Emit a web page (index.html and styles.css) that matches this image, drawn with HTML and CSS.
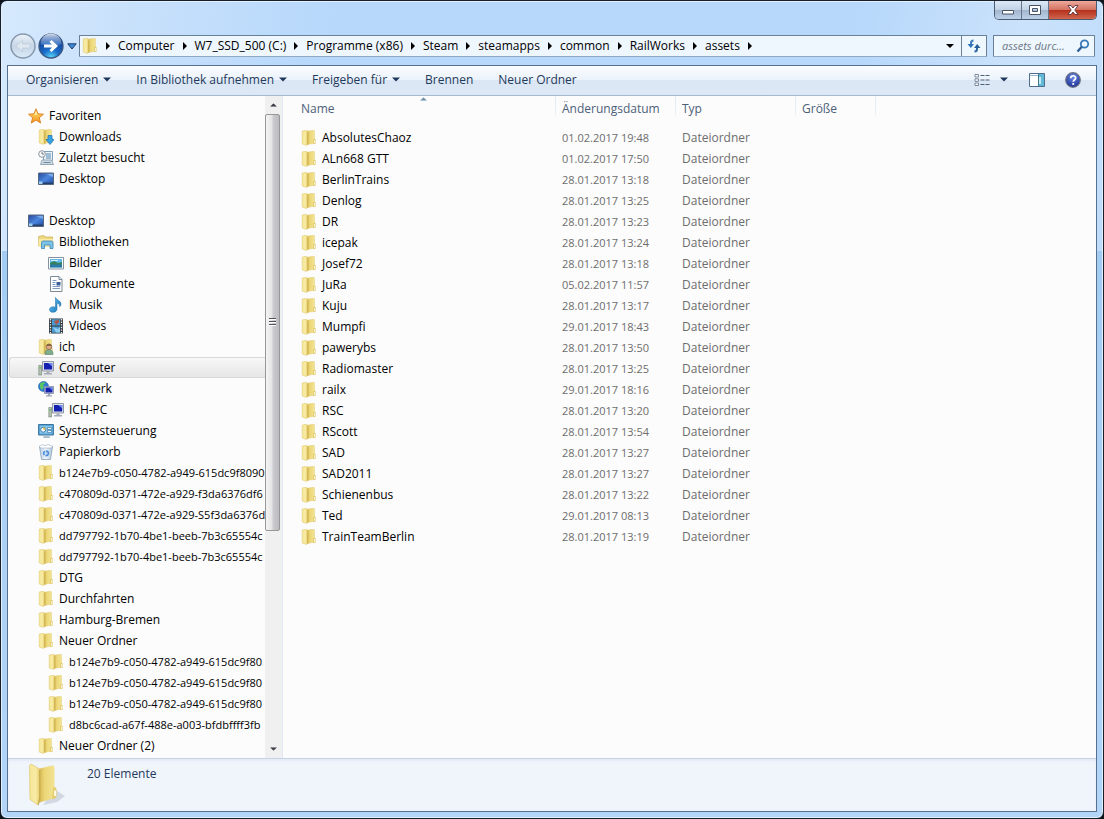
FILE: index.html
```html
<!DOCTYPE html>
<html lang="de">
<head>
<meta charset="utf-8">
<title>assets</title>
<link rel="stylesheet" href="styles.css">
</head>
<body>
<svg class="sprite" aria-hidden="true">
  <defs>
    <linearGradient id="gFold" x1="0" y1="0" x2="1" y2="0"><stop offset="0" stop-color="#f5e795"/><stop offset="0.6" stop-color="#f8eba6"/><stop offset="1" stop-color="#e5cc66"/></linearGradient>
    <linearGradient id="gBack" x1="0" y1="0" x2="1" y2="0"><stop offset="0" stop-color="#d0b14a"/><stop offset="0.4" stop-color="#ecd676"/><stop offset="1" stop-color="#f3e494"/></linearGradient>
    <linearGradient id="gStar" x1="0" y1="0" x2="0" y2="1"><stop offset="0" stop-color="#ffe870"/><stop offset="1" stop-color="#f6941d"/></linearGradient>
    <linearGradient id="gScreen" x1="0" y1="0" x2="1" y2="1"><stop offset="0" stop-color="#27489c"/><stop offset="0.5" stop-color="#4b86dd"/><stop offset="1" stop-color="#1f49a2"/></linearGradient>
    <linearGradient id="gNote" x1="0" y1="0" x2="1" y2="1"><stop offset="0" stop-color="#6cc4f2"/><stop offset="1" stop-color="#1273b8"/></linearGradient>
    <linearGradient id="gBin" x1="0" y1="0" x2="1" y2="0"><stop offset="0" stop-color="#b9cfe3"/><stop offset="0.5" stop-color="#eef6fd"/><stop offset="1" stop-color="#a9c2d9"/></linearGradient>
    <radialGradient id="gOrb" cx="0.5" cy="1" r="0.9"><stop offset="0" stop-color="#5fe0ff"/><stop offset="0.4" stop-color="#1b6cc8"/><stop offset="1" stop-color="#123a8c"/></radialGradient>
    <linearGradient id="gGloss" x1="0" y1="0" x2="0" y2="1"><stop offset="0" stop-color="#ffffff" stop-opacity="0.8"/><stop offset="1" stop-color="#7fb0ee" stop-opacity="0.35"/></linearGradient>
    <radialGradient id="gHelp" cx="0.5" cy="0.3" r="0.7"><stop offset="0" stop-color="#6c8de8"/><stop offset="1" stop-color="#1b2f94"/></radialGradient>
    <linearGradient id="gGhost" x1="0" y1="0" x2="0" y2="1"><stop offset="0" stop-color="#eef4fa"/><stop offset="0.5" stop-color="#c6d5e6"/><stop offset="1" stop-color="#dcebf8"/></linearGradient>
  </defs>
  <symbol id="i-folder" viewBox="0 0 16 16">
    <path d="M5.500 1.300 12.500.3q1 0 1 .8V13l-8 1.800z" fill="url(#gBack)" stroke="#dcc468" stroke-width=".4"/>
    <path d="M1.200 1 5 .3l1.500 1V14.500l-1.200.9-4.100-1.400z" fill="url(#gFold)" stroke="#dcc468" stroke-width=".5"/>
    <path d="M6.800 2.500v12" stroke="#c4a343" stroke-width=".6"/>
    <path d="M12.200 9.200l1.800-.5.7.8v3.900l-2.500.8z" fill="#e2ca68"/><path d="M13.700 10v3" stroke="#fff" stroke-width=".9"/>
  </symbol>
  <symbol id="i-star" viewBox="0 0 16 16">
    <path d="M8 .8l2 5 5.400.4-4.100 3.500 1.300 5.300L8 12.100 3.300 15l1.300-5.300L.6 6.200 6 5.800z" fill="url(#gStar)" stroke="#d9781a" stroke-width=".9"/>
    <path d="M8 3.300l1.200 3.300-3 .3z" fill="#fff5b8"/>
  </symbol>
  <symbol id="i-down" viewBox="0 0 16 16">
    <use href="#i-folder" width="16" height="16"/>
    <path d="M10 6.500h4v4h2l-4 5-4-5h2z" fill="#38a3e6" stroke="#1a6fb2" stroke-width=".7"/>
  </symbol>
  <symbol id="i-recent" viewBox="0 0 16 16">
    <path d="M5.500 1.500h9v9h-9z" fill="#eaf3fa" stroke="#7fa0bb"/>
    <path d="M8 4h5M8 6h5M8 8h5" stroke="#5586b0" stroke-width="1"/>
    <path d="M4 10h9.500l2 4.500H2.500z" fill="#cfdae3" stroke="#8397a6" stroke-width=".8"/>
    <path d="M5.500 12.500h7" stroke="#6d8ca4"/>
    <circle cx="4" cy="4" r="3.300" fill="#f7f9fa" stroke="#8b979f"/><path d="M4 2v2h2" fill="none" stroke="#53606a" stroke-width=".8"/>
  </symbol>
  <symbol id="i-desk" viewBox="0 0 16 16">
    <path d="M.5 2h15v11.500H.5z" fill="url(#gScreen)" stroke="#56687e"/>
    <path d="M1 11.500h14V13H1z" fill="#26406e"/><path d="M1 10.500h3.500V13H1z" fill="#9fd0ee"/>
    <path d="M8 3h7v3z" fill="#9cc4f6" opacity=".6"/>
  </symbol>
  <symbol id="i-lib" viewBox="0 0 16 16">
    <path d="M.7 2.500 6 1.500l1 1.500h7.500v9H.7z" fill="#efd980" stroke="#c8aa4c" stroke-width=".7"/>
    <path d="M.7 5h14.600v7.500H.7z" fill="#faeaa2"/>
    <path d="M3.500 14.500V8.500q0-1.500 1.500-1.500h8.500q1.500 0 1.500 1.500v6h-3V11H6.500v3.500z" fill="#7cc3ea" stroke="#3c84b4" stroke-width=".8"/>
  </symbol>
  <symbol id="i-pic" viewBox="0 0 16 16">
    <path d="M.5 2.500h15v11.500H.5z" fill="#fff" stroke="#8495a1"/>
    <path d="M2 4h12v8.500H2z" fill="#63b9e8"/><path d="M2 8l4-2 4 2 4-1v5H2z" fill="#35825a"/><path d="M2 9.500h12v3H2z" fill="#2a79a6"/><path d="M3 5h7v1H3z" fill="#cdeafa"/>
  </symbol>
  <symbol id="i-doc" viewBox="0 0 16 16">
    <path d="M2.500.5h8.500l3 3v12H2.500z" fill="#fff" stroke="#7c8b98"/><path d="M11 .5v3h3" fill="#dfe6ec" stroke="#7c8b98"/>
    <path d="M4.500 4.500h4M4.500 6.500h3M4.500 8.500h3M4.500 10.500h7.500M4.500 12.500h7.500" stroke="#789cc4"/><path d="M8.500 6h4v3.500h-4z" fill="#3a5f94"/>
  </symbol>
  <symbol id="i-music" viewBox="0 0 16 16">
    <path d="M7.500.5c.8 2.500 5.500 3 5.500 6.500 0 1.200-.6 2-1.300 2.700.2-2.500-1.300-3.300-2.700-3.700v6c0 2-1.700 3.300-4 3.300-2 0-3.500-1-3.500-2.600S3 9.800 5.200 9.800c.9 0 1.700.2 2.300.5z" fill="url(#gNote)" stroke="#1b6ba6" stroke-width=".5"/>
  </symbol>
  <symbol id="i-video" viewBox="0 0 16 16">
    <path d="M1 .5h14v15H1z" fill="#30373d"/><path d="M4 1.200h8v6.300H4zM4 8.500h8v6.300H4z" fill="#4a9bd2"/>
    <path d="M6 3l5-1.500v3L8 7z" fill="#a65a4c"/><path d="M5 9l5 2 2-2v5.500H8z" fill="#8ccdf0"/>
    <path d="M2.500 1v15M13.500 1v15" stroke="#e8eef2" stroke-width="1.400" stroke-dasharray="1.400 1.200"/>
  </symbol>
  <symbol id="i-user" viewBox="0 0 16 16">
    <use href="#i-folder" width="16" height="16"/>
    <path d="M7 15.500c0-4 1.500-5 3.800-5s4.200 1 4.200 5z" fill="#7fae8c" stroke="#4d7d60" stroke-width=".6"/><circle cx="11" cy="7.800" r="2.800" fill="#dca982" stroke="#8d6a4c" stroke-width=".8"/><path d="M8.300 7c.5-3 5-3 5.400 0z" fill="#8a6544"/>
  </symbol>
  <symbol id="i-pc" viewBox="0 0 16 16">
    <path d="M.8 5.500h2.700v9.500H.8z" fill="#b7c4b4" stroke="#6d7c72" stroke-width=".6"/><path d="M1.300 7h1.600v1.500H1.300z" fill="#6cbd5a"/>
    <path d="M4.500 1.500h11v9.500h-11z" fill="#dfe3ea" stroke="#8f96a6"/><path d="M6 3h8.200v6.500H6z" fill="#1420b0"/><path d="M10 3h4.200v3.500z" fill="#6b88ea"/>
    <path d="M8.500 11.500h3v1.500h2.500v1.500H6V13h2.500z" fill="#a5abb8"/>
  </symbol>
  <symbol id="i-net" viewBox="0 0 16 16">
    <circle cx="5.500" cy="5.500" r="5" fill="#2c7fd2" stroke="#1e5a9e" stroke-width=".6"/><path d="M2 2.500c2-2 5-1.500 5.500-.5L5 4l1 2-2 3-2-2.500z" fill="#5bc565"/>
    <path d="M6.500 5.500h9v7h-9z" fill="#d5dae6" stroke="#7b86a0" stroke-width=".8"/><path d="M7.500 6.500h7v5h-7z" fill="#1420b0"/><path d="M11 6.500h3.500v3z" fill="#6b88ea"/><path d="M10 13h2v1.200h2v1.300H8v-1.300h2z" fill="#9aa3b5"/>
  </symbol>
  <symbol id="i-ctl" viewBox="0 0 16 16">
    <path d="M.6 1.500h14.800v10.500H.6z" fill="#5aa9dc" stroke="#38729e"/><path d="M2 3h12v7.500H2z" fill="#8cc6ea"/>
    <circle cx="5.200" cy="6.700" r="2.500" fill="#fff" stroke="#3a7cac"/><path d="M5.200 6.700V4.200a2.500 2.500 0 0 1 2.500 2.500z" fill="#e3bd3e"/><path d="M9.500 4.500h4v2h-4zM9.500 7.500h4v2h-4z" fill="#e9f6fd" stroke="#2e6fa0" stroke-width=".6"/>
    <path d="M6 12.500h5l1.500 2.500H5z" fill="#a9bfce"/>
  </symbol>
  <symbol id="i-bin" viewBox="0 0 16 16">
    <path d="M1.500 2.500h13l-2 13h-9z" fill="url(#gBin)" stroke="#8ba3b8" stroke-width=".8"/><path d="M1 2.500 4 .7l3 1 3-1.200 4.800 2L13 4H3z" fill="#fff" stroke="#9cafc0" stroke-width=".6"/>
    <circle cx="8" cy="9.300" r="2.400" fill="#bcd8f5" stroke="#4a8cda" stroke-width="1.500" stroke-dasharray="4 1"/>
  </symbol>
  <symbol id="i-big" viewBox="0 0 40 44">
    <path d="M26 27l11 7-8 6-14 3z" fill="#8d99a8" opacity=".3"/>
    <path d="M10 7 24 3.500q2.500-.5 2.500 2V36L10 41z" fill="url(#gBack)"/>
    <path d="M1.500 3.500 3 2l8.500 5q.8 13 0 29L10 43 2 37.500z" fill="url(#gFold)" stroke="#dec770" stroke-width=".7"/>
    <path d="M11.800 8v28L10.300 43" fill="none" stroke="#c2a44a"/>
    <path d="M25.500 25q3 0 3 3v6.500q-1 2.500-4.500 2.500z" fill="#e4cc6a"/><path d="M27 28.500v5.500" stroke="#fffdf0" stroke-width="1.800"/>
  </symbol>
  <symbol id="i-tri" viewBox="0 0 8 4"><path d="M0 0h8L4 4z" fill="currentColor"/></symbol>
  <symbol id="i-next" viewBox="0 0 4 8"><path d="M0 0l4 4-4 4z" fill="currentColor"/></symbol>
</svg>

<div class="window">
  <header class="titlebar">
    <div class="caption">
      <button class="cap" aria-label="Minimieren"><svg width="14" height="12" viewBox="0 0 14 12"><path d="M1.500 6.500h11v3.500h-11z" fill="#fff" stroke="#4b5566"/></svg></button>
      <button class="cap" aria-label="Maximieren"><svg width="14" height="12" viewBox="0 0 14 12"><path d="M1.500 1.500h11v9h-11zM4.500 4.500v3h5v-3z" fill="#fff" fill-rule="evenodd" stroke="#4b5566"/></svg></button>
      <button class="cap close" aria-label="Schließen"><svg width="14" height="12" viewBox="0 0 14 12"><path d="M2 1.500h3l2 2.500 2-2.500h3L8.800 6l3.200 4.500H9L7 8l-2 2.500H2L5.200 6z" fill="#fff" stroke="#5a3038" stroke-width=".9"/></svg></button>
    </div>
  </header>

  <div class="navbar">
    <div class="history">
      <button class="bare" aria-label="Zurück"><svg width="28" height="28" viewBox="0 0 28 28"><circle cx="14" cy="14" r="12" fill="url(#gGhost)" stroke="#8698ae" stroke-width="1.500"/><path d="M7 14l6.500-5.500v3.500H21v4h-7.500v3.500z" fill="#dfe8f1" stroke="#b9c7d7" stroke-width=".6"/></svg></button>
      <button class="bare" aria-label="Vorwärts"><svg width="28" height="28" viewBox="0 0 28 28"><circle cx="14" cy="14" r="12" fill="url(#gOrb)" stroke="#3c5880" stroke-width="1.300"/><path d="M3.500 12a10.500 10.500 0 0 1 21 0c-5 2-16 2-21 0z" fill="url(#gGloss)"/><path d="M7 12.500h8L12.500 10l2-2 6.500 6-6.500 6-2-2 2.500-2.500H7z" fill="#fff"/></svg></button>
      <button class="bare drop" aria-label="Verlauf"><svg width="10" height="7" viewBox="0 0 10 7"><path d="M.8.8h8.400L5 6z" fill="#3f8ad2" stroke="#1b3f74"/></svg></button>
    </div>
    <nav class="address" aria-label="Adresse">
      <svg class="ico" width="16" height="16"><use href="#i-folder"/></svg>
      <svg class="sep" width="4" height="8"><use href="#i-next"/></svg><a href="#">Computer</a>
      <svg class="sep" width="4" height="8"><use href="#i-next"/></svg><a href="#">W7_SSD_500 (C:)</a>
      <svg class="sep" width="4" height="8"><use href="#i-next"/></svg><a href="#">Programme (x86)</a>
      <svg class="sep" width="4" height="8"><use href="#i-next"/></svg><a href="#">Steam</a>
      <svg class="sep" width="4" height="8"><use href="#i-next"/></svg><a href="#">steamapps</a>
      <svg class="sep" width="4" height="8"><use href="#i-next"/></svg><a href="#">common</a>
      <svg class="sep" width="4" height="8"><use href="#i-next"/></svg><a href="#">RailWorks</a>
      <svg class="sep" width="4" height="8"><use href="#i-next"/></svg><a href="#">assets</a>
      <svg class="sep" width="4" height="8"><use href="#i-next"/></svg>
      <button class="bare more" aria-label="Vorherige Orte"><svg width="8" height="4"><use href="#i-tri"/></svg></button>
      <button class="bare reload" aria-label="Aktualisieren"><svg width="14" height="14" viewBox="0 0 14 14"><path d="M6.500 1.500Q4 1.500 4 4v2" fill="none" stroke="#3f7dbb" stroke-width="2"/><path d="M.5 5h6.500L3.800 9z" fill="#2f74b8"/><path d="M7.500 12.500q2.500 0 2.500-2.500V8" fill="none" stroke="#2f679f" stroke-width="2"/><path d="M7 9h6.500L10.200 5z" fill="#28609c"/></svg></button>
    </nav>
    <label class="search">
      <input type="text" placeholder="assets durc..." aria-label="assets durchsuchen">
      <svg width="14" height="14" viewBox="0 0 14 14"><circle cx="8.500" cy="5" r="3.700" fill="#eef7ff" stroke="#3a7ab8" stroke-width="1.800"/><path d="M5.800 7.800 1.500 12.500" stroke="#2f5f96" stroke-width="2.400"/></svg>
    </label>
  </div>

  <div class="client">
    <div class="toolbar">
      <button class="tool">Organisieren<svg width="8" height="5"><use href="#i-tri"/></svg></button>
      <button class="tool">In Bibliothek aufnehmen<svg width="8" height="5"><use href="#i-tri"/></svg></button>
      <button class="tool">Freigeben für<svg width="8" height="5"><use href="#i-tri"/></svg></button>
      <button class="tool">Brennen</button>
      <button class="tool">Neuer Ordner</button>
      <div class="views">
        <button class="tool" aria-label="Ansicht"><svg width="16" height="14" viewBox="0 0 16 14"><path d="M1 1.500h3.500v2.500H1zM1 5.800h3.500v2.500H1zM1 10h3.500v2.500H1z" fill="#fff" stroke="#6f7f94" stroke-width=".9"/><path d="M6.500 2.500h4M11.500 2.500h4M6.500 7h4M11.500 7h4M6.500 11.500h4M11.500 11.500h4" stroke="#4d6078"/></svg></button>
        <button class="tool" aria-label="Weitere Optionen"><svg width="8" height="5"><use href="#i-tri"/></svg></button>
        <button class="tool pane" aria-label="Vorschaufenster"><svg width="16" height="14" viewBox="0 0 16 14"><path d="M.5.500h15v13H.500z" fill="#fff" stroke="#4d6d8e"/><path d="M1 2.500h14" stroke="#9fb8cf"/><path d="M9.500 1h5.500v12H9.500z" fill="#63b8d6"/><path d="M9.500 1v12" stroke="#3c7790"/><path d="M11 4v7" stroke="#c4ebf5" stroke-width="2"/></svg></button>
        <button class="tool" aria-label="Hilfe"><svg width="16" height="16" viewBox="0 0 16 16"><circle cx="8" cy="8" r="7.300" fill="url(#gHelp)" stroke="#6b7484" stroke-width="1.200"/><path d="M5.700 6.200c0-3.300 5-3.100 5-.3 0 1.800-2.400 1.900-2.400 3.800" fill="none" stroke="#fff" stroke-width="1.700"/><circle cx="8.200" cy="12" r="1.100" fill="#fff"/></svg></button>
      </div>
    </div>

    <div class="body">
      <aside class="side">
        <nav class="tree" aria-label="Navigation">
          <a href="#" class="l0"><svg class="ico"><use href="#i-star"/></svg>Favoriten</a>
          <a href="#" class="l1"><svg class="ico"><use href="#i-down"/></svg>Downloads</a>
          <a href="#" class="l1"><svg class="ico"><use href="#i-recent"/></svg>Zuletzt besucht</a>
          <a href="#" class="l1 last"><svg class="ico"><use href="#i-desk"/></svg>Desktop</a>
          <a href="#" class="l0"><svg class="ico"><use href="#i-desk"/></svg>Desktop</a>
          <a href="#" class="l1"><svg class="ico"><use href="#i-lib"/></svg>Bibliotheken</a>
          <a href="#" class="l2"><svg class="ico"><use href="#i-pic"/></svg>Bilder</a>
          <a href="#" class="l2"><svg class="ico"><use href="#i-doc"/></svg>Dokumente</a>
          <a href="#" class="l2"><svg class="ico"><use href="#i-music"/></svg>Musik</a>
          <a href="#" class="l2"><svg class="ico"><use href="#i-video"/></svg>Videos</a>
          <a href="#" class="l1"><svg class="ico"><use href="#i-user"/></svg>ich</a>
          <a href="#" class="l1 selected" aria-current="true"><svg class="ico"><use href="#i-pc"/></svg>Computer</a>
          <a href="#" class="l1"><svg class="ico"><use href="#i-net"/></svg>Netzwerk</a>
          <a href="#" class="l2"><svg class="ico"><use href="#i-pc"/></svg>ICH-PC</a>
          <a href="#" class="l1"><svg class="ico"><use href="#i-ctl"/></svg>Systemsteuerung</a>
          <a href="#" class="l1"><svg class="ico"><use href="#i-bin"/></svg>Papierkorb</a>
          <a href="#" class="l1 id"><svg class="ico"><use href="#i-folder"/></svg>b124e7b9-c050-4782-a949-615dc9f8090</a>
          <a href="#" class="l1 id"><svg class="ico"><use href="#i-folder"/></svg>c470809d-0371-472e-a929-f3da6376df6</a>
          <a href="#" class="l1 id"><svg class="ico"><use href="#i-folder"/></svg>c470809d-0371-472e-a929-S5f3da6376d</a>
          <a href="#" class="l1 id"><svg class="ico"><use href="#i-folder"/></svg>dd797792-1b70-4be1-beeb-7b3c65554c</a>
          <a href="#" class="l1 id"><svg class="ico"><use href="#i-folder"/></svg>dd797792-1b70-4be1-beeb-7b3c65554c</a>
          <a href="#" class="l1"><svg class="ico"><use href="#i-folder"/></svg>DTG</a>
          <a href="#" class="l1"><svg class="ico"><use href="#i-folder"/></svg>Durchfahrten</a>
          <a href="#" class="l1"><svg class="ico"><use href="#i-folder"/></svg>Hamburg-Bremen</a>
          <a href="#" class="l1"><svg class="ico"><use href="#i-folder"/></svg>Neuer Ordner</a>
          <a href="#" class="l2 id"><svg class="ico"><use href="#i-folder"/></svg>b124e7b9-c050-4782-a949-615dc9f80</a>
          <a href="#" class="l2 id"><svg class="ico"><use href="#i-folder"/></svg>b124e7b9-c050-4782-a949-615dc9f80</a>
          <a href="#" class="l2 id"><svg class="ico"><use href="#i-folder"/></svg>b124e7b9-c050-4782-a949-615dc9f80</a>
          <a href="#" class="l2 id"><svg class="ico"><use href="#i-folder"/></svg>d8bc6cad-a67f-488e-a003-bfdbffff3fb</a>
          <a href="#" class="l1"><svg class="ico"><use href="#i-folder"/></svg>Neuer Ordner (2)</a>
        </nav>
        <div class="scroll">
          <button class="bare step" aria-label="Nach oben"><svg class="flip" width="7" height="4" viewBox="0 0 8 4"><use href="#i-tri"/></svg></button>
          <div class="track"><div class="thumb"><i></i><i></i><i></i></div></div>
          <button class="bare step" aria-label="Nach unten"><svg width="7" height="4" viewBox="0 0 8 4"><use href="#i-tri"/></svg></button>
        </div>
      </aside>

      <main class="files">
        <table>
          <colgroup><col class="c-name"><col class="c-date"><col class="c-type"><col class="c-size"><col></colgroup>
          <thead><tr><th class="sorted">Name<svg class="flip mark" width="7" height="4" viewBox="0 0 8 4"><use href="#i-tri"/></svg></th><th>Änderungsdatum</th><th>Typ</th><th>Größe</th><td></td></tr></thead>
          <tbody>
            <tr><td><a href="#"><svg class="ico"><use href="#i-folder"/></svg>AbsolutesChaoz</a></td><td>01.02.2017 19:48</td><td>Dateiordner</td></tr>
            <tr><td><a href="#"><svg class="ico"><use href="#i-folder"/></svg>ALn668 GTT</a></td><td>01.02.2017 17:50</td><td>Dateiordner</td></tr>
            <tr><td><a href="#"><svg class="ico"><use href="#i-folder"/></svg>BerlinTrains</a></td><td>28.01.2017 13:18</td><td>Dateiordner</td></tr>
            <tr><td><a href="#"><svg class="ico"><use href="#i-folder"/></svg>Denlog</a></td><td>28.01.2017 13:25</td><td>Dateiordner</td></tr>
            <tr><td><a href="#"><svg class="ico"><use href="#i-folder"/></svg>DR</a></td><td>28.01.2017 13:23</td><td>Dateiordner</td></tr>
            <tr><td><a href="#"><svg class="ico"><use href="#i-folder"/></svg>icepak</a></td><td>28.01.2017 13:24</td><td>Dateiordner</td></tr>
            <tr><td><a href="#"><svg class="ico"><use href="#i-folder"/></svg>Josef72</a></td><td>28.01.2017 13:18</td><td>Dateiordner</td></tr>
            <tr><td><a href="#"><svg class="ico"><use href="#i-folder"/></svg>JuRa</a></td><td>05.02.2017 11:57</td><td>Dateiordner</td></tr>
            <tr><td><a href="#"><svg class="ico"><use href="#i-folder"/></svg>Kuju</a></td><td>28.01.2017 13:17</td><td>Dateiordner</td></tr>
            <tr><td><a href="#"><svg class="ico"><use href="#i-folder"/></svg>Mumpfi</a></td><td>29.01.2017 18:43</td><td>Dateiordner</td></tr>
            <tr><td><a href="#"><svg class="ico"><use href="#i-folder"/></svg>pawerybs</a></td><td>28.01.2017 13:50</td><td>Dateiordner</td></tr>
            <tr><td><a href="#"><svg class="ico"><use href="#i-folder"/></svg>Radiomaster</a></td><td>28.01.2017 13:25</td><td>Dateiordner</td></tr>
            <tr><td><a href="#"><svg class="ico"><use href="#i-folder"/></svg>railx</a></td><td>29.01.2017 18:16</td><td>Dateiordner</td></tr>
            <tr><td><a href="#"><svg class="ico"><use href="#i-folder"/></svg>RSC</a></td><td>28.01.2017 13:20</td><td>Dateiordner</td></tr>
            <tr><td><a href="#"><svg class="ico"><use href="#i-folder"/></svg>RScott</a></td><td>28.01.2017 13:54</td><td>Dateiordner</td></tr>
            <tr><td><a href="#"><svg class="ico"><use href="#i-folder"/></svg>SAD</a></td><td>28.01.2017 13:27</td><td>Dateiordner</td></tr>
            <tr><td><a href="#"><svg class="ico"><use href="#i-folder"/></svg>SAD2011</a></td><td>28.01.2017 13:27</td><td>Dateiordner</td></tr>
            <tr><td><a href="#"><svg class="ico"><use href="#i-folder"/></svg>Schienenbus</a></td><td>28.01.2017 13:22</td><td>Dateiordner</td></tr>
            <tr><td><a href="#"><svg class="ico"><use href="#i-folder"/></svg>Ted</a></td><td>29.01.2017 08:13</td><td>Dateiordner</td></tr>
            <tr><td><a href="#"><svg class="ico"><use href="#i-folder"/></svg>TrainTeamBerlin</a></td><td>28.01.2017 13:19</td><td>Dateiordner</td></tr>
          </tbody>
        </table>
      </main>
    </div>

    <footer class="details">
      <svg width="40" height="44"><use href="#i-big"/></svg>
      <span>20 Elemente</span>
    </footer>
  </div>
</div>
</body>
</html>
```
FILE: styles.css
```css
* { box-sizing: border-box; }
html { background: #10151c; }
body {
  margin: 0;
  font: 12px/16px "Open Sans", "Segoe UI", sans-serif;
  color: #000;
}
a { color: inherit; text-decoration: none; }
button { font: inherit; color: inherit; }
svg { flex: none; display: block; }
.sprite { position: absolute; width: 0; height: 0; }
.ico { width: 16px; height: 16px; }
.bare {
  display: flex;
  align-items: center;
  justify-content: center;
  padding: 0;
  border: 0;
  background: none;
}
.flip { transform: rotate(180deg); }

.window {
  display: flex;
  flex-direction: column;
  height: 100vh;
  padding: 0 6px 6px;
  border: 1px solid #161f2b;
  border-radius: 7px;
  background:
    linear-gradient(100deg, #d6e9fd 0, #c9e1fb 120px, #b7d8fb 330px, #b7d8fb 75%, #cbe2fb 90%, #bedcfb 100%) 0 0 / 100% 250px no-repeat,
    linear-gradient(#9cc7f2, #a9cff4 50%, #b2d5f8);
  box-shadow: inset 0 0 0 1px #e3f1ff;
}

.titlebar { display: flex; justify-content: flex-end; height: 34px; }
.caption {
  display: flex;
  height: 19px;
  border: 1px solid #4c5a70;
  border-top: 0;
  border-radius: 0 0 5px 5px;
  overflow: hidden;
}
.cap {
  display: flex;
  align-items: center;
  justify-content: center;
  width: 27px;
  padding: 0;
  border: 0;
  border-right: 1px solid #64748c;
  background: linear-gradient(#dce9f7, #c3d3e6 48%, #a2b5cd 50%, #bcd0e8);
}
.close {
  width: 47px;
  border-right: 0;
  background: linear-gradient(#eba99b, #d57363 48%, #b52f1b 50%, #d0664e);
}

.navbar { display: flex; align-items: center; height: 22px; margin: 0 2px; }
.history { display: flex; align-items: center; }
.history .drop { width: 14px; height: 20px; }
.address, .search {
  display: flex;
  align-items: center;
  height: 22px;
  border: 1px solid #6a8096;
  border-bottom-color: #8fa9c2;
  border-radius: 1px;
  background: #eef6fe;
}
.address { flex: 1; min-width: 0; padding-left: 2px; white-space: nowrap; }
.sep { margin: 0 8px; }
.more { width: 22px; height: 20px; margin-left: auto; }
.reload { width: 25px; height: 20px; border-left: 1px solid #6a8096; }
.search { width: 102px; margin-left: 6px; padding: 0 4px 0 8px; }
.search input {
  flex: 1;
  min-width: 0;
  padding: 0;
  border: 0;
  outline: 0;
  background: none;
  font: italic 11px/16px "Open Sans", "Segoe UI", sans-serif;
}
.search input::placeholder { color: #6c7784; opacity: 1; }

.client {
  display: flex;
  flex: 1;
  flex-direction: column;
  min-height: 0;
  margin-top: 8px;
  border: 1px solid #56708f;
  background: #fcfcfc;
}
.toolbar {
  display: flex;
  align-items: center;
  gap: 25px;
  height: 30px;
  padding: 0 15px 2px 18px;
  border-bottom: 1px solid #a6b9cf;
  background: linear-gradient(#fbfdff, #ebf2fb 47%, #dbe6f4 50%, #dde8f6);
  color: #1e395b;
}
.tool {
  display: flex;
  align-items: center;
  gap: 5px;
  padding: 0;
  border: 0;
  background: none;
  white-space: nowrap;
}
.views { display: flex; align-items: center; gap: 10px; margin-left: auto; }
.pane { margin: 0 10px 0 11px; }

.body { display: flex; flex: 1; min-height: 0; }
.side {
  display: flex;
  flex: none;
  width: 275px;
  border-right: 1px solid #dfe7f2;
}
.tree { flex: 1; min-width: 0; padding: 9px 0 0 1px; overflow: hidden; }
.tree a {
  display: flex;
  align-items: center;
  gap: 5px;
  height: 21px;
  overflow: hidden;
  white-space: nowrap;
  border: 1px solid transparent;
  border-right: 0;
}
.tree .l0 { padding-left: 18px; }
.tree .l1 { padding-left: 28px; }
.tree .l2 { padding-left: 38px; }
.tree .last { margin-bottom: 21px; }
.tree .selected {
  border-color: #d9d9d9;
  border-radius: 3px 0 0 3px;
  background: linear-gradient(#f8f8f8, #e6e6e6);
}
.id { font-size: 11px; }
.scroll { display: flex; flex-direction: column; width: 17px; background: #f0f0f1; color: #3b3f45; }
.step { height: 18px; }
.track { flex: 1; min-height: 0; }
.thumb {
  display: flex;
  flex-direction: column;
  align-items: center;
  justify-content: center;
  gap: 1px;
  width: 15px;
  height: 66.6%;
  border: 1px solid #979797;
  border-radius: 2px;
  background: linear-gradient(90deg, #f5f5f5, #e4e4e6 45%, #cbcbce 55%, #bcbcc0);
}
.thumb i { width: 7px; height: 2px; border-top: 1px solid #4f5359; background: #fff; }

.files { flex: 1; min-width: 0; overflow: hidden; }
table { width: 100%; table-layout: fixed; border-collapse: collapse; }
.c-name { width: 273px; }
.c-date, .c-type { width: 120px; }
.c-size { width: 80px; }
th {
  height: 31px;
  padding: 5px 0 10px 6px;
  color: #4c607a;
  font-weight: 400;
  text-align: left;
  white-space: nowrap;
  background: linear-gradient(#dfe8f2, #eef2f7) right 0 top 0 / 1px 20px no-repeat;
}
th.sorted { position: relative; padding-left: 18px; }
.mark { position: absolute; top: 1px; left: 50%; color: #6d93aa; }
tbody td { height: 21px; padding: 0 0 0 6px; color: #6d6d6d; white-space: nowrap; }
tbody td:first-child { padding-left: 18px; color: #000; }
tbody td:nth-child(2) { font-size: 11px; }
tbody a { display: flex; align-items: center; gap: 5px; }

.details {
  display: flex;
  gap: 19px;
  height: 53px;
  padding: 3px 20px 4px;
  border-top: 1px solid #c5d3e3;
  background: #f0f4fb;
  box-shadow: inset 0 2px 2px #e4ebf5;
  color: #1e395b;
}
.details span { padding-top: 4px; }
```
